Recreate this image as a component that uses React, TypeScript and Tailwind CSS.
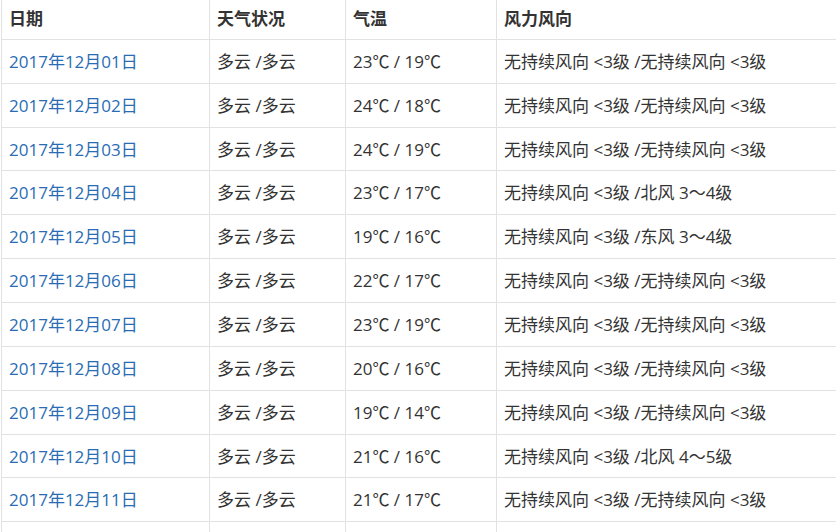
import React from "react";

const rows: [string, string, string, string][] = [
  ["2017年12月01日", "多云 /多云", "23℃ / 19℃", "无持续风向 <3级 /无持续风向 <3级"],
  ["2017年12月02日", "多云 /多云", "24℃ / 18℃", "无持续风向 <3级 /无持续风向 <3级"],
  ["2017年12月03日", "多云 /多云", "24℃ / 19℃", "无持续风向 <3级 /无持续风向 <3级"],
  ["2017年12月04日", "多云 /多云", "23℃ / 17℃", "无持续风向 <3级 /北风 3～4级"],
  ["2017年12月05日", "多云 /多云", "19℃ / 16℃", "无持续风向 <3级 /东风 3～4级"],
  ["2017年12月06日", "多云 /多云", "22℃ / 17℃", "无持续风向 <3级 /无持续风向 <3级"],
  ["2017年12月07日", "多云 /多云", "23℃ / 19℃", "无持续风向 <3级 /无持续风向 <3级"],
  ["2017年12月08日", "多云 /多云", "20℃ / 16℃", "无持续风向 <3级 /无持续风向 <3级"],
  ["2017年12月09日", "多云 /多云", "19℃ / 14℃", "无持续风向 <3级 /无持续风向 <3级"],
  ["2017年12月10日", "多云 /多云", "21℃ / 16℃", "无持续风向 <3级 /北风 4～5级"],
  ["2017年12月11日", "多云 /多云", "21℃ / 17℃", "无持续风向 <3级 /无持续风向 <3级"],
  ["", "", "", ""],
];

export default function App() {
  return (
    <div
      className="w-[836px] h-[532px] overflow-hidden bg-white pl-[1px]"
      style={{ fontFamily: '"Open Sans", "Noto Sans CJK SC", sans-serif' }}
    >
      <table className="border-collapse w-[900px] text-[17px] leading-[22.86px] text-[#333]">
        <colgroup>
          <col className="w-[208px]" />
          <col className="w-[136px]" />
          <col className="w-[151px]" />
          <col />
        </colgroup>
        <thead>
          <tr>
            <th className="border-l border-r border-b border-[#e2e2e2] text-left font-bold px-[7px] py-[8px] whitespace-nowrap">日期</th>
            <th className="border-r border-b border-[#e2e2e2] text-left font-bold px-[7px] py-[8px] whitespace-nowrap">天气状况</th>
            <th className="border-r border-b border-[#e2e2e2] text-left font-bold px-[7px] py-[8px] whitespace-nowrap">气温</th>
            <th className="border-b border-[#e2e2e2] text-left font-bold px-[7px] py-[8px] whitespace-nowrap">风力风向</th>
          </tr>
        </thead>
        <tbody>
          {rows.map((r, i) => (
            <tr key={i}>
              <td className="border-l border-r border-b border-[#e2e2e2] px-[7px] pt-[11px] pb-[9px] whitespace-nowrap text-[#2a6cb4]">
                {r[0] || "\u00a0"}
              </td>
              <td className="border-r border-b border-[#e2e2e2] px-[7px] pt-[11px] pb-[9px] whitespace-nowrap">{r[1] || "\u00a0"}</td>
              <td className="border-r border-b border-[#e2e2e2] px-[7px] pt-[11px] pb-[9px] whitespace-nowrap">{r[2] || "\u00a0"}</td>
              <td className="border-b border-[#e2e2e2] px-[7px] pt-[11px] pb-[9px] whitespace-nowrap">{r[3] || "\u00a0"}</td>
            </tr>
          ))}
        </tbody>
      </table>
    </div>
  );
}
